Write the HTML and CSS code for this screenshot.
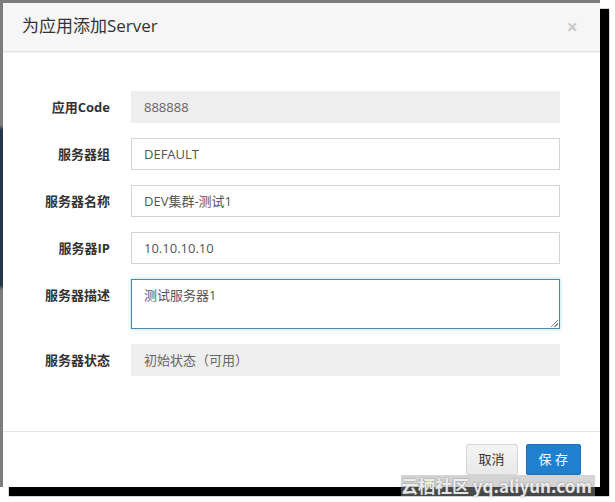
FILE: index.html
```html
<!DOCTYPE html>
<html lang="zh-CN">
<head>
<meta charset="utf-8">
<title>为应用添加Server</title>
<link rel="stylesheet" href="styles.css">
</head>
<body>
<div class="backdrop">
  <div class="modal">
    <div class="modal-header">
      <h4 class="modal-title">为应用添加Server</h4>
      <span class="close">×</span>
    </div>
    <div class="modal-body">
      <div class="form-group">
        <label class="control-label">应用Code</label>
        <div class="form-control readonly">888888</div>
      </div>
      <div class="form-group">
        <label class="control-label">服务器组</label>
        <div class="form-control">DEFAULT</div>
      </div>
      <div class="form-group">
        <label class="control-label">服务器名称</label>
        <div class="form-control">DEV集群-测试1</div>
      </div>
      <div class="form-group">
        <label class="control-label">服务器IP</label>
        <div class="form-control">10.10.10.10</div>
      </div>
      <div class="form-group">
        <label class="control-label">服务器描述</label>
        <div class="form-control textarea">测试服务器1<span class="grip"></span></div>
      </div>
      <div class="form-group">
        <label class="control-label">服务器状态</label>
        <div class="form-control readonly">初始状态（可用）</div>
      </div>
    </div>
    <div class="modal-footer">
      <button class="btn btn-default">取消</button>
      <button class="btn btn-primary">保 存</button>
    </div>
  </div>
  <div class="watermark">云栖社区 yq.aliyun.com</div>
</div>
</body>
</html>
```
FILE: styles.css
```css
* { box-sizing: border-box; }
html, body {
  margin: 0;
  padding: 0;
  background: #ffffff;
}
body {
  width: 615px;
  height: 502px;
  font-family: "Open Sans", "Noto Sans CJK SC", sans-serif;
  font-size: 13px;
  color: #333;
}
.backdrop {
  position: relative;
  width: 600px;
  height: 487px;
  padding: 3px 0 0 3px;
  background: linear-gradient(to bottom, #7d7d7d 0, #7d7d7d 125px, #24384a 130px, #24384a 285px, #7d7d7d 290px, #7d7d7d 100%);
  box-shadow: 9px 9px 1px #000;
}
.modal {
  width: 597px;
  height: 484px;
  background: #fff;
  display: flex;
  flex-direction: column;
}
.modal-header {
  height: 49px;
  padding: 0 22px 0 19px;
  background: #f6f6f6;
  border-bottom: 1px solid #e3e3e3;
  box-shadow: 0 1px 0 #f3f3f3;
  display: flex;
  align-items: center;
  justify-content: space-between;
}
.modal-title {
  margin: 0;
  font-size: 17px;
  font-weight: normal;
  color: #333;
  line-height: 24px;
  padding-bottom: 2px;
}
.close {
  font-size: 20px;
  font-weight: bold;
  color: #000;
  opacity: 0.18;
  line-height: 1;
}
.modal-body {
  flex: 1;
  padding: 39px 40px 0 0;
}
.form-group {
  display: flex;
  align-items: flex-start;
  margin-bottom: 15px;
}
.control-label {
  width: 107px;
  text-align: right;
  font-weight: bold;
  line-height: 32px;
  color: #333;
  margin-right: 21px;
  flex: none;
}
.form-control {
  width: 429px;
  height: 32px;
  padding: 0 12px;
  line-height: 30px;
  border: 1px solid #d4d4d4;
  background: #fff;
  color: #555;
  font-size: 13px;
}
.form-control.readonly {
  background: #eeeeee;
  border-color: #eeeeee;
  color: #666;
}
.form-control.textarea {
  position: relative;
  height: 50px;
  line-height: 20px;
  padding-top: 5px;
  border-color: #4f87a9;
  box-shadow: 0 0 3px 1px rgba(102, 200, 233, 0.35);
}
.grip {
  position: absolute;
  right: 1px;
  bottom: 1px;
  width: 7px;
  height: 7px;
  background: linear-gradient(135deg, transparent 0 45%, #888 45% 55%, transparent 55% 70%, #888 70% 80%, transparent 80%);
}
.modal-footer {
  height: 56px;
  border-top: 1px solid #e5e5e5;
  padding: 12px 19px 0 0;
  display: flex;
  justify-content: flex-end;
  align-items: flex-start;
  gap: 8px;
}
.btn {
  height: 31px;
  padding: 0 12px;
  font-family: "Open Sans", "Noto Sans CJK SC", sans-serif;
  font-size: 13px;
  line-height: 29px;
  border: 1px solid transparent;
  border-radius: 2px;
  margin: 0;
}
.btn-default {
  color: #333;
  background: linear-gradient(#f4f4f4, #e9e9e9);
  border-color: #d6d6d6;
}
.btn-primary {
  color: #fff;
  background: #1f80cf;
  border-color: #1b72ba;
}
.watermark {
  position: absolute;
  left: 401px;
  top: 475px;
  height: 21px;
  padding-right: 3px;
  font-family: "Noto Sans CJK SC", sans-serif;
  font-size: 17px;
  font-weight: bold;
  line-height: 21px;
  white-space: nowrap;
  color: rgba(255, 255, 255, 0.85);
  background: rgba(160, 160, 160, 0.45);
  text-shadow: 0 0 2px rgba(90, 90, 90, 0.7);
}
```
